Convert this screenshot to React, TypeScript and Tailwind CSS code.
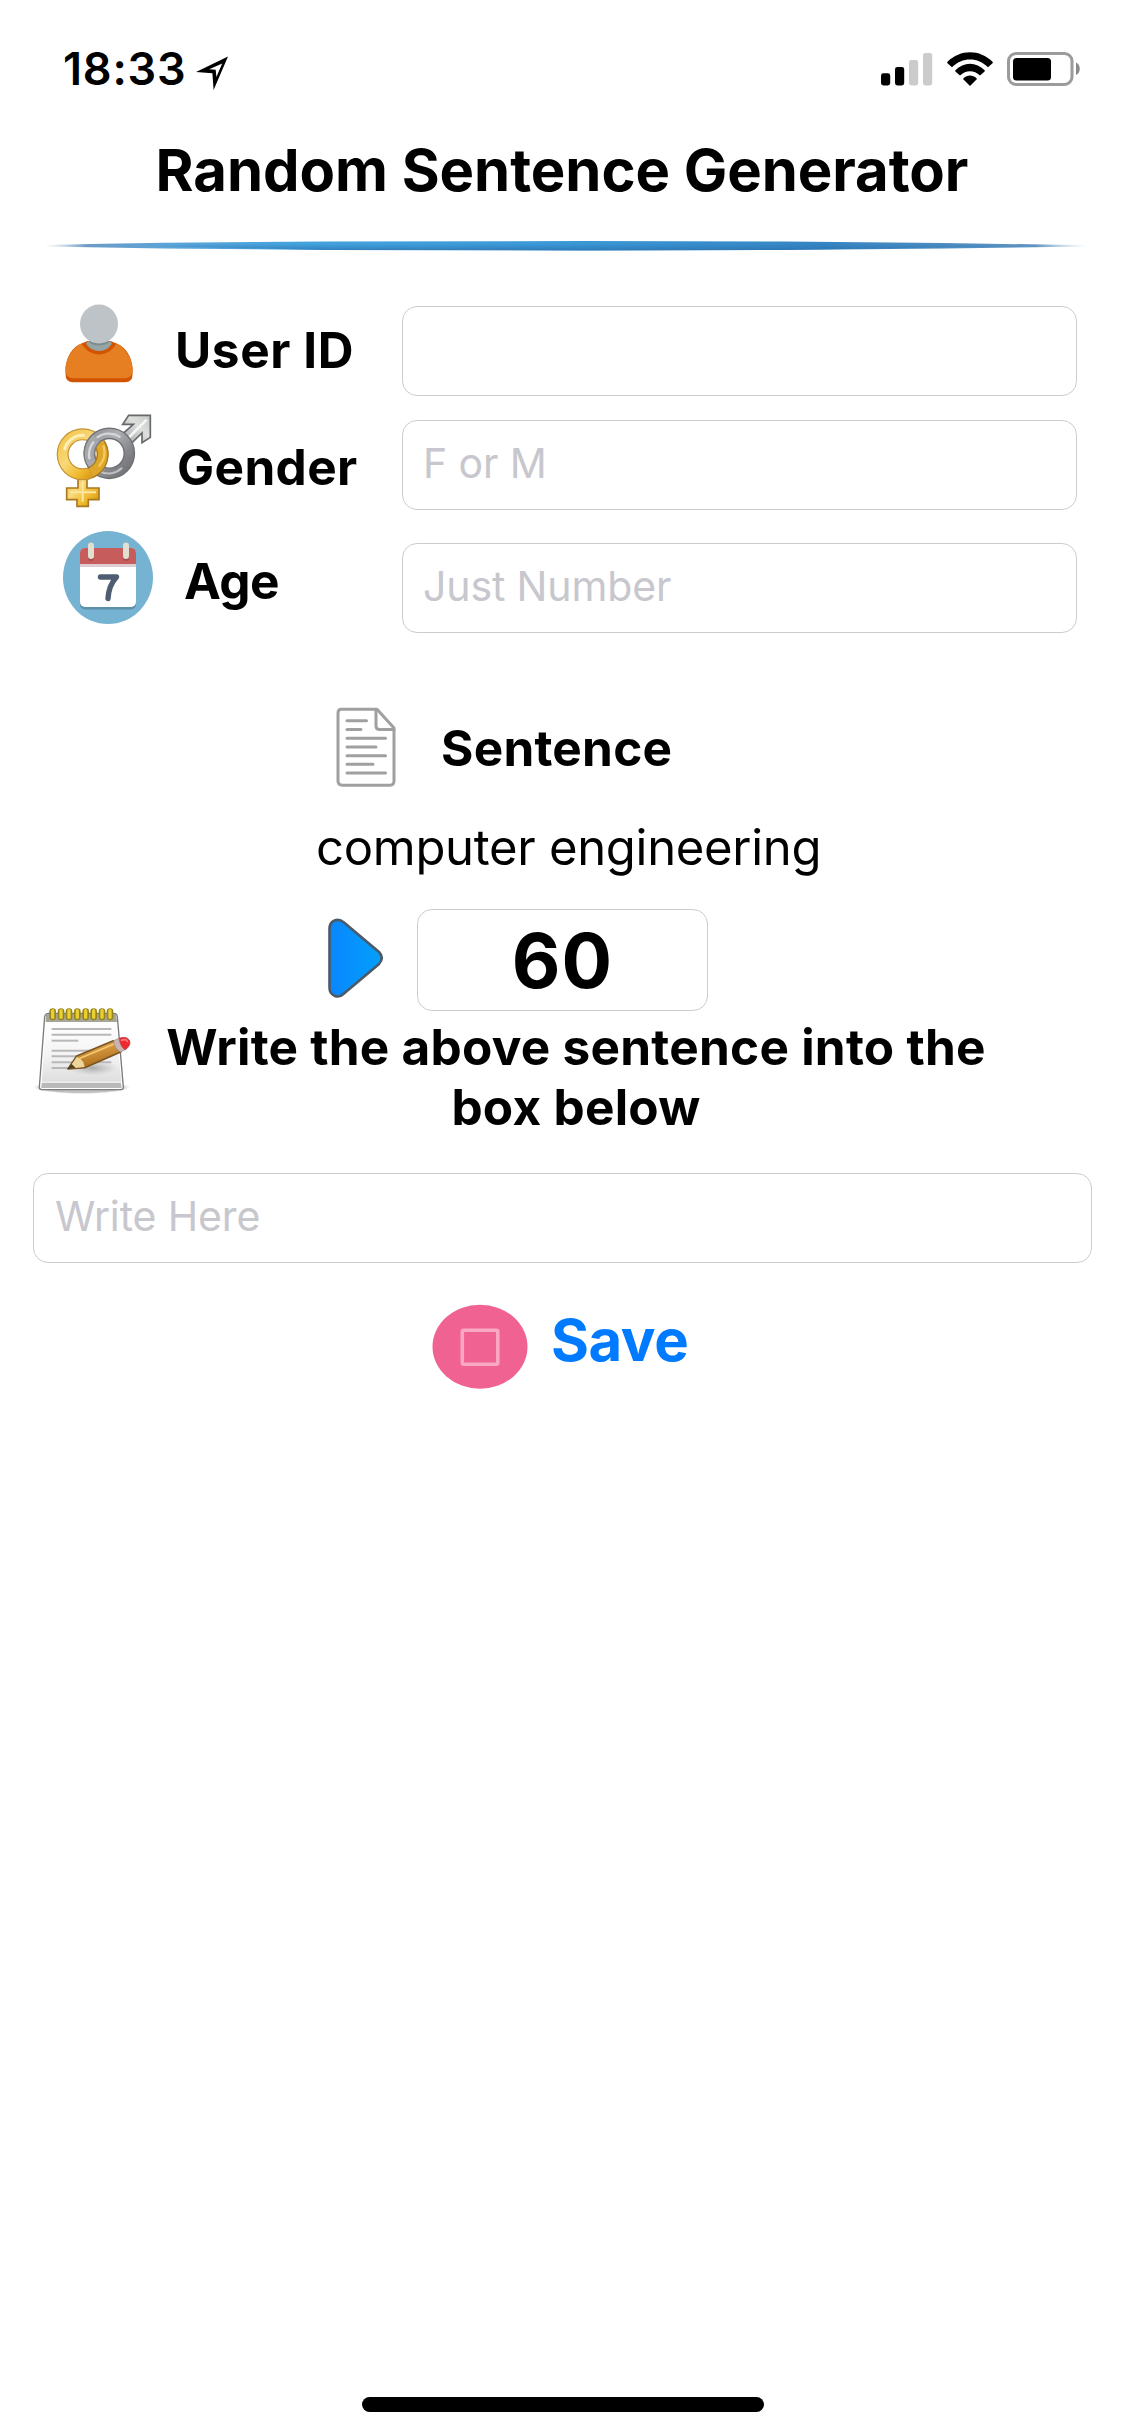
import type { ReactNode } from "react";

const LABEL = "h-[60px] whitespace-nowrap text-[49.5px] leading-[60px] font-bold";
const FIELD =
  "block h-[90px] rounded-[15px] border border-[#cccccc] bg-white pb-1 text-[41px] tracking-[-0.13px] text-black outline-none placeholder:text-[#c7c7cd] placeholder:opacity-100";

function LocationArrow() {
  return (
    <svg className="mt-[17px] h-[36px] w-[34px]" viewBox="0 0 34 36">
      <path
        fillRule="evenodd"
        d="M32 .5 17.600 34 16.400 17.2 0 16 Z M26.200 7.500 13.2 13.300 19.700 13.800 20.400 21 Z"
      />
    </svg>
  );
}

function SignalBars() {
  return (
    <svg className="h-[34px] w-[52px]" viewBox="0 0 52 34">
      <rect x="0" y="21.3" width="9.2" height="12.2" rx="2.4" />
      <rect x="14" y="15" width="9.2" height="18.5" rx="2.4" />
      <rect x="28" y="8" width="9.2" height="25.5" rx="2.4" fill="#cbcbcb" />
      <rect x="42" y="1" width="9.2" height="32.5" rx="2.4" fill="#cbcbcb" />
    </svg>
  );
}

function Wifi() {
  return (
    <svg className="h-[34px] w-[46px]" viewBox="0 0 46 34">
      <path d="M.5 9.8C13-3 33-3 45.500 9.800 46 10.400 46 10.800 45.500 11.300L41 15.300C31 4.800 15 4.800 5 15.300L.5 11.300C0 10.800 0 10.400 .5 9.800Z" />
      <path d="M8.400 18.300C16.500 9.600 29.500 9.600 37.600 18.300 38 18.800 38 19.100 37.600 19.500L33 23.600C27 17.800 19 17.800 13 23.600L8.400 19.500C8 19.100 8 18.800 8.400 18.300Z" />
      <path d="M16.500 26.300C20.300 22.700 25.700 22.700 29.500 26.300 29.900 26.700 29.900 27.200 29.500 27.600L23 34 16.500 27.600C16.100 27.200 16.100 26.700 16.500 26.300Z" />
    </svg>
  );
}

function Battery() {
  return (
    <svg className="h-[34px] w-[74px]" viewBox="0 0 74 34">
      <rect x="1.500" y="1.500" width="63.500" height="31" rx="7.500" fill="#fff" stroke="#9b9b9b" strokeWidth="3" />
      <rect x="6" y="6" width="38" height="22.500" rx="3.500" />
      <path d="M69 10.500C74 12.500 74 21 69 23Z" fill="#8a8a8a" />
    </svg>
  );
}

function Divider() {
  return (
    <svg className="ml-[44px] block h-[12px] w-[1044px]" viewBox="0 0 1044 12">
      <defs>
        <linearGradient id="rule" x1="0" x2="1">
          <stop offset="0" stopColor="#9fbdd6" stopOpacity="0" />
          <stop offset=".04" stopColor="#6d9cc6" />
          <stop offset=".12" stopColor="#5aa4d8" />
          <stop offset=".25" stopColor="#43a3de" />
          <stop offset=".5" stopColor="#3b98d6" />
          <stop offset=".75" stopColor="#3585c3" />
          <stop offset=".95" stopColor="#5f94c0" />
          <stop offset="1" stopColor="#a9c3dc" stopOpacity="0" />
        </linearGradient>
        <linearGradient id="ruleShade" x1="0" y1="0" x2="0" y2="1">
          <stop offset=".3" stopColor="#2b74b4" stopOpacity="0" />
          <stop offset="1" stopColor="#2b6fab" stopOpacity=".7" />
        </linearGradient>
      </defs>
      <path d="M0 5 60 3.800 120 2.800 280 1.500 540 1 740 1.500 900 3 1044 5.200V6.500L900 8.600 740 10 540 10.400 280 10 120 8.500 60 7.600 0 6.500Z" fill="url(#rule)" />
      <path d="M110 6 280 1.500 540 1 740 1.500 980 6 740 10 540 10.400 280 10Z" fill="url(#ruleShade)" />
    </svg>
  );
}

function UserIcon() {
  return (
    <svg className="h-[110px] w-[110px]" viewBox="50 300 110 110">
      <path d="M65.500 370C65.500 355 76 343.300 84 343.300H114C122 343.300 132.600 355 132.600 370V374Q132.600 382.300 125 382.300H73Q65.500 382.300 65.500 374Z" fill="#d35400" />
      <path d="M65.500 370C65.500 358 75 345.500 82 343.600 91 357.500 107 357.500 116 343.600 123 345.500 132.600 358 132.600 370V371Q132.300 378.300 125 378.300H73Q65.800 378.300 65.500 371Z" fill="#e67e22" />
      <path d="M81.500 343.500 87.500 341H110.500L116.500 343.500C108 358 90 358 81.500 343.500Z" fill="#d35400" />
      <path d="M86 343.300 90 340H108L112 343.300C107 353.500 91 353.500 86 343.300Z" fill="#95a5a6" />
      <path d="M88 341H110L107 343.800C102 346 96 346 91 343.800Z" fill="#7f8c8d" />
      <ellipse cx="99" cy="324" rx="19" ry="19.500" fill="#bdc3c7" />
    </svg>
  );
}

function GenderIcon() {
  return (
    <svg className="h-[110px] w-[110px]" viewBox="0 0 330 330">
      <defs>
        <linearGradient id="gold" x1="0" y1="0" x2="1" y2="1">
          <stop offset="0" stopColor="#f3c64b" />
          <stop offset=".4" stopColor="#f8d878" />
          <stop offset=".7" stopColor="#efb92c" />
          <stop offset="1" stopColor="#c98a12" />
        </linearGradient>
        <linearGradient id="silver" x1="0" y1="0" x2="1" y2="1">
          <stop offset="0" stopColor="#8f9194" />
          <stop offset=".35" stopColor="#adafb2" />
          <stop offset=".7" stopColor="#85878b" />
          <stop offset="1" stopColor="#6f7174" />
        </linearGradient>
        <linearGradient id="arrow" x1="0" y1="1" x2="1" y2="0">
          <stop offset="0" stopColor="#a0a2a5" />
          <stop offset=".6" stopColor="#dddfdc" />
          <stop offset="1" stopColor="#c4c7c4" />
        </linearGradient>
      </defs>
      <path d="M84 205H111V249H147V284H115V304H81V284H50V249H84Z" fill="url(#gold)" stroke="#a9781f" strokeWidth="5" />
      <path d="M98 215V262H138M60 262H98V290" fill="none" stroke="#fbe7a0" strokeWidth="6" />
      <circle cx="98" cy="148" r="60" fill="none" stroke="#c29136" strokeWidth="36" />
      <circle cx="98" cy="148" r="60" fill="none" stroke="url(#gold)" strokeWidth="29" />
      <path d="M44 132A56 56 0 0 1 100 91" fill="none" stroke="#fdeeb9" strokeWidth="9" strokeLinecap="round" />
      <path d="M216 88 250 58H218L236 31H301V97L276 113V84L242 117Z" fill="url(#arrow)" stroke="#66686b" strokeWidth="5" />
      <path d="M236 98 290 44" fill="none" stroke="#f6f8f5" strokeWidth="8" />
      <circle cx="178" cy="145" r="60" fill="none" stroke="#6c6e72" strokeWidth="35" />
      <circle cx="178" cy="145" r="60" fill="none" stroke="url(#silver)" strokeWidth="27" />
      <path d="M135 103A60 60 0 0 1 209 95" fill="none" stroke="#d4d6d8" strokeWidth="7" strokeLinecap="round" />
      <path d="M150 200A60 60 0 0 0 215 190" fill="none" stroke="#bfc1c4" strokeWidth="6" strokeLinecap="round" />
      <path d="M149 116A60 60 0 0 1 122 203" fill="none" stroke="#a87722" strokeWidth="35" />
      <path d="M149 116A60 60 0 0 1 122 203" fill="none" stroke="#dfa62a" strokeWidth="28" />
      <path d="M122 167A60 60 0 0 1 140 99" fill="none" stroke="#77797d" strokeWidth="35" />
      <path d="M122 168A60 60 0 0 1 140 99" fill="none" stroke="#a5a7aa" strokeWidth="27" />
      <path d="M118 160A60 60 0 0 1 130 112" fill="none" stroke="#d6d8da" strokeWidth="7" strokeLinecap="round" />
      <path d="M161 124Q170 158 148 182" fill="none" stroke="#f4ca5c" strokeWidth="7" strokeLinecap="round" />
    </svg>
  );
}

function CalendarIcon() {
  return (
    <svg className="h-[110px] w-[110px]" viewBox="50 520 110 110">
      <ellipse cx="108" cy="577.500" rx="45" ry="46.500" fill="#76b3d2" />
      <rect x="80" y="550" width="56" height="59.500" rx="5" fill="#5d8fa8" />
      <rect x="80" y="548" width="56" height="59" rx="5" fill="#fff" />
      <path d="M80 564V553Q80 548 85 548H131Q136 548 136 553V564Z" fill="#c75c5c" />
      <rect x="80" y="564" width="56" height="3" fill="#e0cdd1" />
      <rect x="88" y="544.500" width="6" height="16.500" rx="3" fill="#a94f4f" />
      <rect x="123" y="544.500" width="6" height="16.500" rx="3" fill="#a94f4f" />
      <rect x="88" y="542.500" width="6" height="16.500" rx="3" fill="#e0dfd0" />
      <rect x="123" y="542.500" width="6" height="16.500" rx="3" fill="#e0dfd0" />
      <path d="M100.500 577H116.500C111 583 108.500 590 108 598.500" fill="none" stroke="#4f5d73" strokeWidth="5.400" strokeLinecap="round" strokeLinejoin="round" />
    </svg>
  );
}

function DocumentIcon() {
  return (
    <svg className="mt-[2px] h-[94px] w-[70px]" viewBox="330 702 70 94" fill="none" stroke="#a0a0a0" strokeWidth="3" strokeLinecap="round" strokeLinejoin="round">
      <path d="M341.500 709.300H377L394 728V781Q394 785.200 390 785.200H342.500Q338 785.200 338 781V713Q338 709.300 341.500 709.300Z" />
      <path d="M376 710V726Q376 729.500 379.500 729.500H394" />
      <path d="M347 720.800H366.500M347 729.500H361M347 738.300H385.500M347 747H376M347 755.700H385.500M347 764.300H373M347 773H385.500" />
    </svg>
  );
}

function PlayIcon() {
  return (
    <svg className="h-[100px] w-[70px]" viewBox="320 909 70 100">
      <defs>
        <linearGradient id="play" x1="0" x2="1">
          <stop offset="0" stopColor="#0a86ff" />
          <stop offset="1" stopColor="#02a0fb" />
        </linearGradient>
      </defs>
      <path
        d="M329.500 929C329.500 920 338 917.500 344 922.500L379 952Q384.500 957.700 379 964L344 993.500C338 999.500 329.500 995.500 329.500 987.500Z"
        fill="url(#play)"
        stroke="#4b5a68"
        strokeWidth="2.600"
      />
    </svg>
  );
}

function NotepadIcon() {
  const rings = [68, 93, 117, 142, 167, 191, 216, 240];
  const rules = ["M65 87H244", "M65 104H244", "M65 122H145", "M65 152H244", "M65 169H244", "M65 187H244", "M65 204H180"];
  return (
    <svg className="h-[105px] w-[110px]" viewBox="0 0 330 315">
      <defs>
        <linearGradient id="page" x1="0" y1="0" x2="0" y2="1">
          <stop offset="0" stopColor="#ffffff" />
          <stop offset=".55" stopColor="#f4f4f4" />
          <stop offset="1" stopColor="#dedede" />
        </linearGradient>
        <linearGradient id="pencil" x1="0" y1="0" x2=".35" y2="1">
          <stop offset=".2" stopColor="#e5a748" />
          <stop offset="1" stopColor="#ab6c1c" />
        </linearGradient>
        <radialGradient id="ground">
          <stop offset=".8" stopColor="#777" stopOpacity=".45" />
          <stop offset="1" stopColor="#999" stopOpacity="0" />
        </radialGradient>
        <radialGradient id="cast">
          <stop offset="0" stopColor="#777" stopOpacity=".55" />
          <stop offset="1" stopColor="#999" stopOpacity="0" />
        </radialGradient>
      </defs>
      <ellipse cx="155" cy="262" rx="146" ry="20" fill="url(#ground)" />
      <path d="M56 40H251Q261 40 262 50L280 262Q280 269 273 269H36Q28 269 28 262L44 50Q46 40 56 40Z" fill="#fff" stroke="#7b7b7b" strokeWidth="4" />
      <path d="M49 65H257L274 245H35Z" fill="url(#page)" />
      <path d="M48 42H258L261 66H47Z" fill="#a6a698" />
      <path d="M36 248H273L275 264H33Z" fill="#b9b9b9" />
      <ellipse cx="188" cy="204" rx="75" ry="22" fill="url(#cast)" />
      <g stroke="#b8b8b8" strokeWidth="6">{rules.map((d) => <path key={d} d={d} />)}</g>
      {rings.map((x) => (
        <g key={x}>
          <rect x={x - 10} y="25" width="20" height="36" rx="10" fill="#97831c" />
          <rect x={x - 5} y="27" width="10" height="30" rx="5" fill="#e8d034" />
        </g>
      ))}
      <path d="M114 207 140 168 250 122 272 156 164 203Z" fill="url(#pencil)" stroke="#7a5424" strokeWidth="5" strokeLinejoin="round" />
      <path d="M116 206 140 171 150 175 160 187 164 201Z" fill="#ecd49b" />
      <path d="M112 208 124 191 138 205Z" fill="#57401f" />
      <path d="M150 175 254 131" stroke="#f4c877" strokeWidth="5" />
      <path d="M250 123 270 113 290 147 271 156Q254 147 250 123Z" fill="#c9b3b3" stroke="#94807f" strokeWidth="2" />
      <path d="M268 115Q288 107 298 120 305 137 285 149 270 139 268 115Z" fill="#ee2a2e" stroke="#b8474a" strokeWidth="2.500" />
      <path d="M275 121Q287 115 292 124" fill="none" stroke="#ff7b7b" strokeWidth="5" strokeLinecap="round" />
    </svg>
  );
}

function StopIcon() {
  return (
    <svg className="h-[95px] w-[110px]" viewBox="425 1300 110 95">
      <ellipse cx="480" cy="1346.800" rx="47.500" ry="42" fill="#f06292" />
      <rect x="462.300" y="1330.300" width="35.500" height="34" rx="1.500" fill="none" stroke="#f9a8c3" strokeWidth="3.600" />
    </svg>
  );
}

function FormRow({ className, icon, label, children }: { className: string; icon: ReactNode; label: ReactNode; children: ReactNode }) {
  return (
    <div className={className}>
      {icon}
      <div className="w-[242px]">{label}</div>
      {children}
    </div>
  );
}

export default function App() {
  return (
    <div className="flex h-[2436px] w-[1125px] flex-col overflow-hidden bg-white font-['Inter',sans-serif] text-black">
      <div className="flex h-[130px] items-start justify-between pt-[39px] pr-[44px] pl-[63px]">
        <div className="flex items-start gap-[10px]">
          <span className="text-[45px] leading-[60px] font-semibold tracking-[0.8px]">18:33</span>
          <LocationArrow />
        </div>
        <div className="flex items-center gap-[14px] pt-[13px]">
          <SignalBars />
          <Wifi />
          <Battery />
        </div>
      </div>

      <h1 className="h-[110px] pr-[1px] text-center text-[58px] leading-[80px] font-bold tracking-[-0.04px]">Random Sentence Generator</h1>
      <Divider />

      <div className="mt-[48px] flex flex-col pl-[50px]">
        <FormRow className="flex h-[105px] items-start" icon={<UserIcon />} label={<div className={`${LABEL} mt-[20px] ml-[15px] tracking-[0.6px]`}>User ID</div>}>
          <input className={`${FIELD} mt-[6px] w-[675px] px-[22px]`} aria-label="User ID" />
        </FormRow>
        <FormRow className="flex h-[115px] items-start" icon={<GenderIcon />} label={<div className={`${LABEL} mt-[32px] ml-[17px] tracking-[0.37px]`}>Gender</div>}>
          <input className={`${FIELD} mt-[15px] w-[675px] px-[20px]`} placeholder="F or M" aria-label="Gender" />
        </FormRow>
        <FormRow className="flex h-[180px] items-start" icon={<CalendarIcon />} label={<div className={`${LABEL} mt-[31px] ml-[24px] tracking-[-0.6px]`}>Age</div>}>
          <input className={`${FIELD} mt-[23px] w-[675px] px-[20px]`} placeholder="Just Number" aria-label="Age" />
        </FormRow>
      </div>

      <div className="flex h-[118px] items-start pl-[330px]">
        <DocumentIcon />
        <h2 className={`${LABEL} mt-[18px] ml-[41px] tracking-[0.25px]`}>Sentence</h2>
      </div>
      <p className="h-[91px] pl-[316px] text-[49px] leading-[60px] tracking-[-0.3px]">computer engineering</p>

      <div className="flex items-start pl-[320px]">
        <PlayIcon />
        <div className="ml-[27px] flex h-[102px] w-[291px] items-center justify-center rounded-[15px] border border-[#cccccc] text-[75px] leading-none font-bold tracking-[1px]">60</div>
      </div>

      <div className="-mt-[11px] flex h-[173px] items-start pl-[30px]">
        <NotepadIcon />
        <p className="mt-[17px] ml-[6px] w-[860px] text-center text-[49.5px] leading-[60px] font-bold tracking-[0.26px]">
          Write the above sentence into the box below
        </p>
      </div>

      <input className={`${FIELD} ml-[33px] w-[1059px] px-[21px]`} placeholder="Write Here" aria-label="Write Here" />

      <div className="mt-[37px] flex items-start pl-[425px]">
        <StopIcon />
        <button className="ml-[16px] text-[58px] leading-[80px] font-bold tracking-[-0.4px] text-[#007aff]">Save</button>
      </div>

      <div className="mt-auto mb-[24px] h-[15px] w-[402px] self-center rounded-full bg-black" />
    </div>
  );
}
